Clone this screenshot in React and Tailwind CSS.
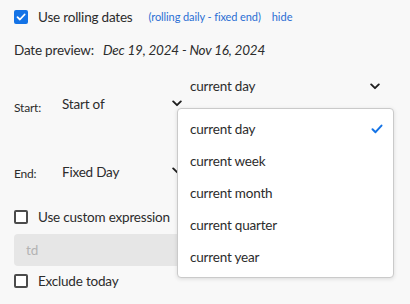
import React from 'react';

const font = { fontFamily: 'Lato, "Open Sans", sans-serif' };

const Chevron = ({ className = '' }) => (
  <svg width="10" height="7" viewBox="0 0 10 7" className={className}>
    <path d="M1.2 1.4 L5 5.2 L8.8 1.4" fill="none" stroke="#1f1f1f" strokeWidth="1.9" strokeLinecap="round" strokeLinejoin="round" />
  </svg>
);

const Checkbox = ({ checked }) =>
  checked ? (
    <span className="flex h-[14px] w-[14px] items-center justify-center rounded-[2px] bg-[#1473e6]">
      <svg width="10" height="8" viewBox="0 0 10 8">
        <path d="M1.5 4.2 L3.9 6.5 L8.6 1.5" fill="none" stroke="#fff" strokeWidth="1.8" strokeLinecap="round" strokeLinejoin="round" />
      </svg>
    </span>
  ) : (
    <span className="h-[14px] w-[14px] rounded-[2px] border-2 border-[#4b4b4b] bg-white" />
  );

const options = ['current day', 'current week', 'current month', 'current quarter', 'current year'];

export default function App() {
  return (
    <div className="relative h-[304px] w-[410px] overflow-hidden bg-[#f8f8f8] pl-[14px] text-[13.5px] tracking-[-0.2px] text-[#2c2c2c]" style={font}>
      <div className="mt-[7px] flex h-[20px] items-center">
        <Checkbox checked />
        <span className="ml-[10px]">Use rolling dates</span>
        <span className="ml-[16px] text-[11px] tracking-[-0.1px] text-[#2b6fd4]">(rolling daily - fixed end)</span>
        <span className="ml-[11px] text-[11px] tracking-normal text-[#2b6fd4]">hide</span>
      </div>

      <div className="mt-[13px] flex h-[20px] items-center">
        <span>Date preview:</span>
        <span className="ml-[9px] italic">Dec 19, 2024 - Nov 16, 2024</span>
      </div>

      <div className="mt-[12px] flex h-[44px]">
        <span className="flex h-[16px] w-[48px] items-center self-end text-[12px]">Start:</span>
        <div className="flex h-[24px] w-[120px] items-center justify-between self-end">
          <span>Start of</span>
          <Chevron className="mb-[2px]" />
        </div>
        <div className="ml-[8px] flex h-[28px] w-[194px] items-center justify-between self-start">
          <span>current day</span>
          <Chevron className="mr-[4px]" />
        </div>
      </div>

      <div className="mt-[44px] flex h-[24px] items-end">
        <span className="mb-[2px] flex h-[16px] w-[48px] items-center text-[12px]">End:</span>
        <div className="flex h-[24px] w-[120px] items-center justify-between">
          <span>Fixed Day</span>
          <Chevron className="mb-[4px]" />
        </div>
      </div>

      <div className="mt-[23px] flex h-[20px] items-center">
        <Checkbox />
        <span className="ml-[10px]">Use custom expression</span>
      </div>

      <div className="mt-[7px] flex h-[32px] w-[320px] items-center rounded-[4px] bg-[#e6e6e6] px-[12px] text-[#b3b3b3]">
        td
      </div>

      <div className="mt-[5px] flex h-[20px] items-center">
        <Checkbox />
        <span className="ml-[10px]">Exclude today</span>
      </div>

      <ul className="absolute left-[177px] top-[108px] w-[217px] rounded-[4px] border border-[#cacaca] bg-white py-[4px] shadow-[0_1px_4px_rgba(0,0,0,0.12)]">
        {options.map((o, i) => (
          <li key={o} className="flex h-[32px] items-center justify-between pl-[12px] pr-[10px]">
            <span>{o}</span>
            {i === 0 && (
              <svg width="12" height="10" viewBox="0 0 12 10">
                <path d="M1.5 5.3 L4.5 8.2 L10.5 1.6" fill="none" stroke="#1473e6" strokeWidth="2" strokeLinecap="round" strokeLinejoin="round" />
              </svg>
            )}
          </li>
        ))}
      </ul>
    </div>
  );
}
